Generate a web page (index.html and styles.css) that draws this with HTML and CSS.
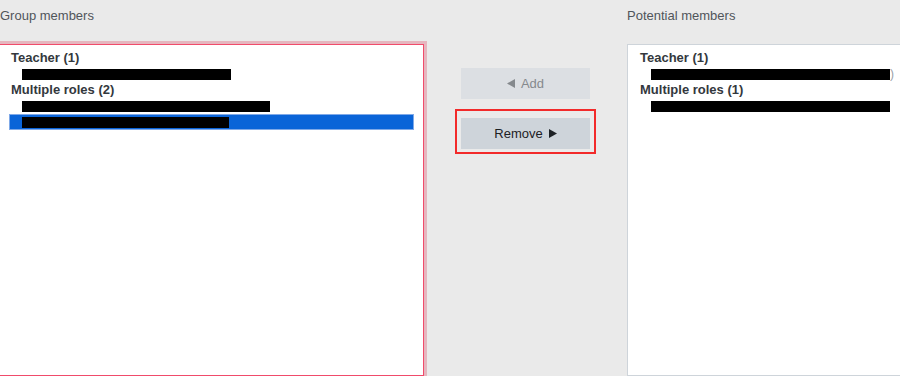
FILE: index.html
```html
<!DOCTYPE html>
<html lang="en">
<head>
  <meta charset="UTF-8">
  <meta name="viewport" content="width=device-width, initial-scale=1.0">
  <title>Group members</title>
  <link rel="stylesheet" href="styles.css">
</head>
<body>
  <div class="members">
    <!-- Membres actuels -->
    <div class="column column-current">
      <div class="column-title">Group members</div>
      <div class="listbox listbox-focus">
        <div class="group-label">Teacher (1)</div>
        <div class="option"><span class="redacted" style="width: 209px"></span></div>
        <div class="group-label">Multiple roles (2)</div>
        <div class="option"><span class="redacted" style="width: 248px"></span></div>
        <div class="option selected"><span class="redacted" style="width: 207px"></span></div>
      </div>
    </div>

    <!-- Boutons -->
    <div class="actions">
      <button class="action-btn" disabled>
        <svg class="arrow" width="8" height="9" viewBox="0 0 8 9"><path d="M8 0 L8 9 L0 4.5 Z" fill="currentColor"/></svg>
        Add
      </button>
      <div class="highlight">
        <button class="action-btn action-remove">
          Remove
          <svg class="arrow" width="8" height="9" viewBox="0 0 8 9"><path d="M0 0 L0 9 L8 4.5 Z" fill="currentColor"/></svg>
        </button>
      </div>
    </div>

    <!-- Membres potentiels -->
    <div class="column column-potential">
      <div class="column-title">Potential members</div>
      <div class="listbox">
        <div class="group-label">Teacher (1)</div>
        <div class="option"><span class="redacted" style="width: 239px"></span><span class="tail">)</span></div>
        <div class="group-label">Multiple roles (1)</div>
        <div class="option"><span class="redacted" style="width: 239px"></span></div>
      </div>
    </div>
  </div>
</body>
</html>
```

FILE: styles.css
```css
body {
  margin: 0;
  background: #eaeaea;
  font-family: 'Liberation Sans', Arial, sans-serif;
  font-size: 13px;
  color: #1d2125;
  height: 376px;
  overflow: hidden;
}

.members {
  display: flex;
  margin-left: -2px;
  width: 1100px;
}

.column-current {
  width: 426px;
}

.column-current .column-title {
  padding-left: 2px;
}

.column-potential {
  width: 320px;
}

.column-title {
  height: 44px;
  padding-top: 6px;
  box-sizing: border-box;
  line-height: 20px;
  color: #50555a;
}

.listbox {
  height: 332px;
  box-sizing: border-box;
  background: #fff;
  border: 1px solid #ced4da;
  padding: 5px 9px 0 10px;
}

.listbox-focus {
  border-color: #f04b6b;
  box-shadow: 0 0 0 3px #e6b6bf;
}

.group-label {
  height: 16px;
  line-height: 16px;
  font-weight: bold;
  color: #33383d;
  padding-left: 2px;
}

.option {
  height: 16px;
  display: flex;
  align-items: center;
  padding-left: 13px;
}

.option.selected {
  background: #0a64d8;
  box-shadow: inset 0 0 0 1px #7fa9e8;
}

.redacted {
  display: inline-block;
  height: 11px;
  background: #000;
}

.tail {
  color: #9aa0a6;
  font-size: 12px;
  line-height: 11px;
}

.actions {
  width: 203px;
  display: flex;
  flex-direction: column;
  align-items: center;
  padding-top: 68px;
}

.action-btn {
  width: 129px;
  height: 31px;
  border: none;
  border-radius: 0;
  background: #ced4da;
  color: #1d2125;
  font-family: inherit;
  font-size: 13px;
  display: flex;
  align-items: center;
  justify-content: center;
  gap: 6px;
  padding: 0;
}

.action-btn[disabled] {
  background: #dcdfe3;
  color: #85898d;
}

.arrow {
  display: block;
}

.highlight {
  margin-top: 10px;
  border: 2px solid #f22a2a;
  padding: 7px 4px 3px 4px;
}
```
